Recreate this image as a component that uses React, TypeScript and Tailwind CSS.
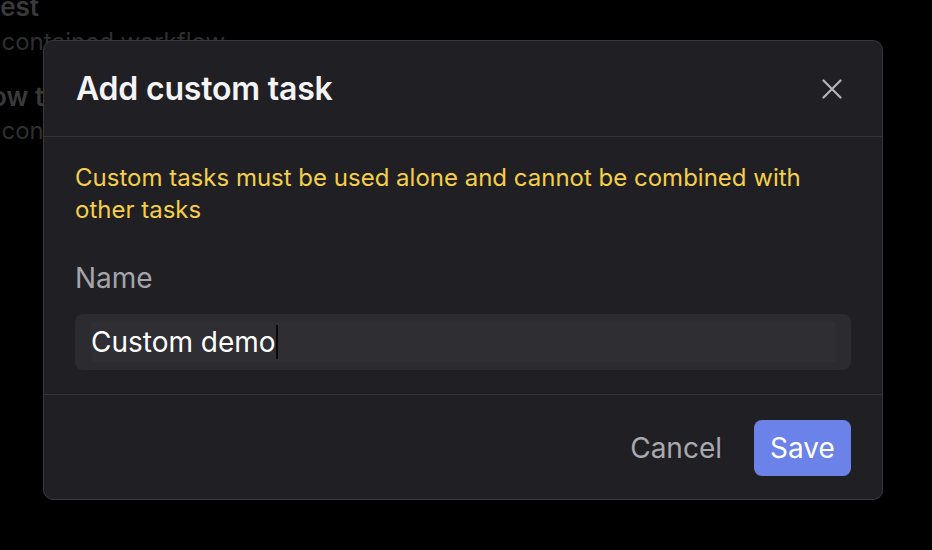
import React from "react";

export default function App() {
  return (
    <div
      className="relative w-[932px] h-[550px] overflow-hidden bg-black"
      style={{ fontFamily: "Inter, 'Noto Sans', sans-serif" }}
    >
      {/* background page (dimmed) */}
      <div className="flex flex-col whitespace-nowrap">
        <div className="-mt-[9px] -ml-[15px] text-[26px] font-semibold leading-[32px] text-[#3a3a3c]">Test</div>
        <div className="-ml-[53px] mt-[2px] text-[24px] leading-[34px] text-[#2f2f31]">Self-contained workflow</div>
        <div className="-ml-[31px] mt-[21px] text-[26px] font-semibold leading-[34px] text-[#3a3a3c]">Flow test</div>
        <div className="-ml-[53px] text-[24px] leading-[34px] text-[#2f2f31]">Self-contained workflow</div>
      </div>

      {/* dialog */}
      <div className="absolute left-[43px] top-[40px] w-[840px] rounded-[10px] border border-[#38383d] bg-[#202024] flex flex-col">
        <div className="flex items-center justify-between h-[96px] pl-[32px] pr-[40px] border-b border-[#333338]">
          <div className="text-[32px] font-semibold text-[#f4f4f6] tracking-[-0.2px]">Add custom task</div>
          <svg width="20" height="20" viewBox="0 0 20 20" className="text-[#b4b4ba]">
            <path d="M1.5 1.5 L18.5 18.5 M18.5 1.5 L1.5 18.5" stroke="currentColor" strokeWidth="2.2" strokeLinecap="round" />
          </svg>
        </div>
        <div className="flex flex-col px-[31px] pt-[25px] pb-[24px] border-b border-[#333338]">
          <div className="text-[24px] leading-[32px] text-[#f4cf4a]">
            Custom tasks must be used alone and cannot be combined with other tasks
          </div>
          <div className="mt-[36px] text-[28px] leading-[32px] text-[#a4a4ac]">Name</div>
          <div className="mt-[20px] h-[56px] rounded-[8px] bg-[#2b2b30] px-[16px] py-[8px] flex">
            <div className="flex-1 flex items-center bg-[#2e2e33] text-[28px] text-white">
              <span>Custom demo</span>
              <span className="w-[2px] h-[34px] bg-[#0a0a0a]"></span>
            </div>
          </div>
        </div>
        <div className="flex items-center justify-end gap-[32px] px-[31px] pt-[25px] pb-[23px]">
          <div className="text-[28px] text-[#a9a9b0]">Cancel</div>
          <div className="h-[56px] w-[97px] rounded-[8px] bg-[#6b82e8] flex items-center justify-center text-[28px] text-white">
            Save
          </div>
        </div>
      </div>
    </div>
  );
}
